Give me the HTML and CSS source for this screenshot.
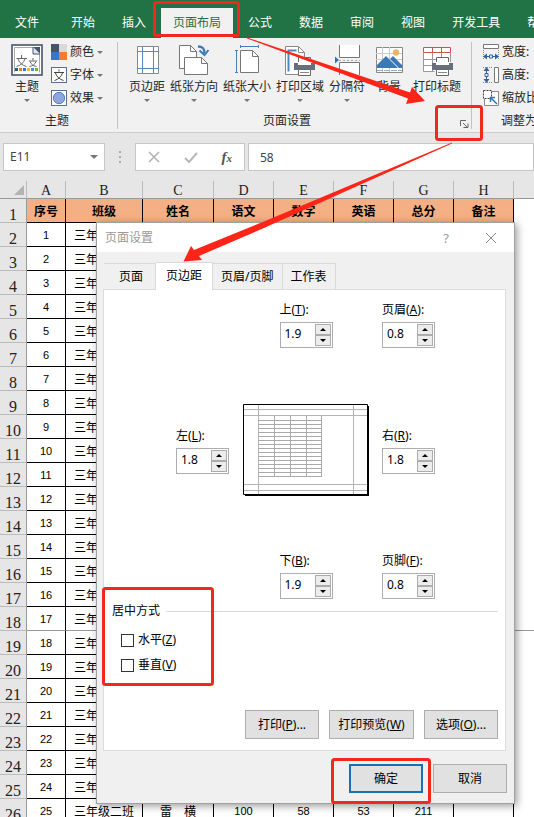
FILE: index.html
```html
<!DOCTYPE html>
<html lang="zh-CN">
<head>
<meta charset="utf-8">
<meta name="viewport" content="width=device-width, initial-scale=1">
<title>页面设置</title>
<link rel="stylesheet" href="styles.css">
</head>
<body>
<div class="app">
  <nav class="tabs">
    <button class="tab tab-file">文件</button>
    <button class="tab">开始</button>
    <button class="tab">插入</button>
    <button class="tab active">页面布局</button>
    <button class="tab">公式</button>
    <button class="tab">数据</button>
    <button class="tab">审阅</button>
    <button class="tab">视图</button>
    <button class="tab">开发工具</button>
    <button class="tab">帮助</button>
  </nav>

  <div class="ribbon">
    <section class="group group-theme">
      <div class="tools">
        <button class="big">
          <svg width="32" height="32" viewBox="0 0 32 32" fill="none">
            <rect x="1" y="1" width="30" height="30" fill="#fff" stroke="#44546a" stroke-width="1.6"/>
            <path d="M3.500 28.500V3.500H22L28.500 10V28.500" stroke="#a8a8a8"/>
            <path d="M22 3l7 7V3z" fill="#44546a"/><path d="M22 3v7h7" fill="#dce3ec" stroke="#44546a"/>
            <path d="M10.500 11v3M5.500 14.500H16M7 15c1.500 4 4.500 6.500 8.500 7.500M14 15c-1.500 4-4.500 6.500-8.500 7.500M22 14v2.500M18 17h8M19 17.500c1 3 3.500 4.500 6.500 5M25 17.500c-1 3-3.500 4.500-6.500 5" stroke="#666"/>
            <path d="M4 25.500h3" stroke="#44546a" stroke-width="3"/><path d="M8 25.500h3" stroke="#ed7d31" stroke-width="3"/><path d="M12 25.500h3" stroke="#4472c4" stroke-width="3"/><path d="M16 25.500h3" stroke="#f5b72c" stroke-width="3"/><path d="M20 25.500h3" stroke="#4a90c8" stroke-width="3"/><path d="M24 25.500h3" stroke="#70ad47" stroke-width="3"/>
          </svg>
          <span>主题</span><i class="caret"></i>
        </button>
        <div class="stack">
          <button class="small">
            <svg width="16" height="16"><path fill="#44546a" d="M0 0h8v8H0z"/><path fill="#d9d9d9" d="M8 0h8v8H8z"/><path fill="#3b74c8" d="M0 8h8v8H0z"/><path fill="#ed7d31" d="M8 8h8v8H8z"/></svg>
            <span>颜色</span><i class="caret"></i>
          </button>
          <button class="small">
            <svg width="16" height="16" fill="none"><rect x=".5" y=".5" width="15" height="15" fill="#fff" stroke="#5b6f8c"/><path d="M8 2.500v2M3 5.500h10M4.500 6c1 3.500 4 6.500 8 7.500M11.500 6c-1 3.500-4 6.500-8 7.500" stroke="#444"/></svg>
            <span>字体</span><i class="caret"></i>
          </button>
          <button class="small">
            <svg width="16" height="16"><rect x=".5" y=".5" width="15" height="15" fill="#fff" stroke="#5b6f8c"/><circle cx="8" cy="8" r="5.700" fill="#8ea6dc" stroke="#5e7cc4"/></svg>
            <span>效果</span><i class="caret"></i>
          </button>
        </div>
      </div>
      <div class="caption">主题</div>
    </section>

    <section class="group group-page">
      <div class="tools">
        <button class="big">
          <svg width="32" height="32" fill="none"><path d="M6.500 2.500h21v27h-21z" fill="#fff" stroke="#888"/><path d="M11.500 2v28M22.500 2v28M6 7.500h22M6 24.500h22" stroke="#5b88b5"/></svg>
          <span>页边距</span><i class="caret"></i>
        </button>
        <button class="big">
          <svg width="32" height="32" fill="none"><path d="M1.500 24.500v-23h11l6 6v17z" fill="#fff" stroke="#777"/><path d="M12.500 1.500v6h6" stroke="#777"/><path d="M6.500 30.500v-17h17l6 6v11z" fill="#fff" stroke="#777"/><path d="M23.500 13.500v6h6" stroke="#777"/><path d="M20 2.500c5 0 6.500 2 6.500 7" stroke="#3d7ab8" stroke-width="2.400"/><path d="M21.500 6.500l5 4.500 4-5" stroke="#3d7ab8" stroke-width="2"/></svg>
          <span>纸张方向</span><i class="caret"></i>
        </button>
        <button class="big">
          <svg width="32" height="32" fill="none"><path d="M9.500 28.500v-22h12l6 6v16z" fill="#fff" stroke="#777"/><path d="M21.500 6.500v6h6" stroke="#777"/><path d="M9 2.500h19M9.500 1v3M27.500 1v3M5.500 6v23M4 6.500h3M4 28.500h3" stroke="#4a7fb5"/></svg>
          <span>纸张大小</span><i class="caret"></i>
        </button>
        <button class="big">
          <svg width="32" height="32" fill="none"><path d="M1.500 30.500v-28h13l6 6v22z" fill="#fff" stroke="#888"/><path d="M14.500 2.500v6h6" stroke="#888"/><path d="M4.500 27.500v-21h8" stroke="#4a88bd" stroke-width="2"/><path d="M14.500 13.500h12v7h-12z" fill="#fff" stroke="#666"/><path d="M10 19h21v7H10z" fill="#66707c"/><path d="M14 18h13v3H14z" fill="#fff"/><path d="M14.500 25.500h12v6h-12z" fill="#fff" stroke="#666"/><path d="M16 28.500h9" stroke="#888"/></svg>
          <span>打印区域</span><i class="caret"></i>
        </button>
        <button class="big">
          <svg width="32" height="32" fill="none"><path d="M8.500 1v12.500h20V1M8.500 31V18.500h20V31" fill="#fff" stroke="#777"/><path d="M4 12.500l4 3.500-4 3.500z" fill="#2e75b6"/><path d="M8 16.500h21" stroke="#aaa" stroke-dasharray="2 2"/></svg>
          <span>分隔符</span><i class="caret"></i>
        </button>
        <button class="big bg-button">
          <svg width="32" height="32" fill="none"><path d="M3.500 3.500h26v25h-26z" fill="#fff" stroke="#888"/><path d="M3 9.500h26M3 15.500h26M9.500 3v25M16.500 3v25" stroke="#ccc"/><circle cx="23" cy="8.500" r="3.200" fill="#e8b76c"/><path d="M4 24v-3l9-9 12 12z" fill="#3c78b4"/><path d="M17 15l3-3 9 9v3h-3z" fill="#3c78b4"/><path d="M4 26.500h25" stroke="#9ab" stroke-dasharray="6 1"/></svg>
          <span>背景</span>
        </button>
        <button class="big">
          <svg width="32" height="32" fill="none"><path d="M2.500 3.500h27v24h-27z" fill="#fff"/><path d="M2.500 9v18.500h11M2 15.500h18M2 21.500h10M11.500 9v18M20.500 9v5M29.500 9v9" stroke="#999"/><path d="M2.500 3.500h27v5h-27zM11.500 3v5M20.500 3v5" stroke="#c6574c"/><path d="M15.500 13.500h12v7h-12z" fill="#fff" stroke="#666"/><path d="M11 19h21v7H11z" fill="#66707c"/><path d="M15 18h13v3H15z" fill="#fff"/><path d="M15.500 25.500h12v6h-12z" fill="#fff" stroke="#666"/><path d="M17 28.500h9" stroke="#888"/></svg>
          <span>打印标题</span>
        </button>
      </div>
      <div class="caption">页面设置
        <button class="launcher" aria-label="页面设置"><svg width="10" height="10" fill="none" stroke="#666"><path d="M1.500 7V1.500H7M4 4l4.500 4.500M9 4.500V8.500H4.500"/></svg></button>
      </div>
    </section>

    <section class="group group-scale">
      <div class="tools">
        <div class="stack">
          <button class="small">
            <svg width="16" height="16" fill="none"><path d="M.5.500h15v4H.5z" fill="#fff" stroke="#777"/><path d="M.5 6v9M15.500 6v9" stroke="#888" stroke-dasharray="1 1"/><path d="M0 12.500l4-3v6zM16 12.500l-4-3v6z" fill="#2e62a6"/><path d="M3 12.500h3M10 12.500h3M6.500 11h3v3h-3z" stroke="#2e62a6"/></svg>
            <span>宽度:</span>
          </button>
          <button class="small">
            <svg width="16" height="16" fill="none"><path d="M11.500.500h4v15h-4z" fill="#fff" stroke="#777"/><path d="M0 .5h10M0 15.500h10" stroke="#888" stroke-dasharray="1 1"/><path d="M3.500 0l-3 4h6zM3.500 16l-3-4h6z" fill="#2e62a6"/><path d="M3.500 3v3M3.500 10v3M2 6.500h3v3H2z" stroke="#2e62a6"/></svg>
            <span>高度:</span>
          </button>
          <button class="small">
            <svg width="16" height="16" fill="none"><path d="M5 1.500h10.500v14H1.500V9" fill="#fff" stroke="#888"/><path d="M.5.500h8v8h-8z" fill="#fff" stroke="#444" stroke-dasharray="2 1"/><path d="M14 14L8 8M7.500 12V7.500H12" stroke="#2e75b6" stroke-width="1.500"/></svg>
            <span>缩放比例:</span>
          </button>
        </div>
      </div>
      <div class="caption">调整为合适大小</div>
    </section>
  </div>

  <div class="formula-bar">
    <div class="name-box"><input aria-label="名称框" value="E11"><i class="caret"></i></div>
    <svg class="grip" width="4" height="16" fill="#aaa"><path d="M1 2h2v2H1zM1 7h2v2H1zM1 12h2v2H1z"/></svg>
    <div class="fx-box">
      <button aria-label="取消"><svg width="14" height="14" stroke="#b0b0b0" stroke-width="1.500" fill="none"><path d="M2 2l10 10M12 2L2 12"/></svg></button>
      <button aria-label="输入"><svg width="14" height="14" stroke="#b8b8b8" stroke-width="2" fill="none"><path d="M1 8l4 4L13 3"/></svg></button>
      <button class="fx">f<small>x</small></button>
    </div>
    <input class="formula" aria-label="编辑栏" value="58">
  </div>

  <main class="sheet">
    <table>
      <colgroup><col class="c-row"><col class="c-a"><col class="c-b"><col class="c-c"><col class="c-n"><col class="c-n"><col class="c-n"><col class="c-n"><col class="c-n"><col></colgroup>
      <thead>
        <tr><th><svg class="corner" width="10" height="10"><path d="M10 0v10H0z" fill="#b3b3b3"/></svg></th><th>A</th><th>B</th><th>C</th><th>D</th><th>E</th><th>F</th><th>G</th><th>H</th><th></th></tr>
      </thead>
      <tbody>
        <tr class="titles"><th>1</th><td>序号</td><td>班级</td><td>姓名</td><td>语文</td><td>数字</td><td>英语</td><td>总分</td><td>备注</td><td></td></tr>
        <tr><th>2</th><td>1</td><td class="grade">三年</td><td colspan="6"></td><td></td></tr>
        <tr><th>3</th><td>2</td><td class="grade">三年</td><td colspan="6"></td><td></td></tr>
        <tr><th>4</th><td>3</td><td class="grade">三年</td><td colspan="6"></td><td></td></tr>
        <tr><th>5</th><td>4</td><td class="grade">三年</td><td colspan="6"></td><td></td></tr>
        <tr><th>6</th><td>5</td><td class="grade">三年</td><td colspan="6"></td><td></td></tr>
        <tr><th>7</th><td>6</td><td class="grade">三年</td><td colspan="6"></td><td></td></tr>
        <tr><th>8</th><td>7</td><td class="grade">三年</td><td colspan="6"></td><td></td></tr>
        <tr><th>9</th><td>8</td><td class="grade">三年</td><td colspan="6"></td><td></td></tr>
        <tr><th>10</th><td>9</td><td class="grade">三年</td><td colspan="6"></td><td></td></tr>
        <tr><th>11</th><td>10</td><td class="grade">三年</td><td colspan="6"></td><td></td></tr>
        <tr><th>12</th><td>11</td><td class="grade">三年</td><td colspan="6"></td><td></td></tr>
        <tr><th>13</th><td>12</td><td class="grade">三年</td><td colspan="6"></td><td></td></tr>
        <tr><th>14</th><td>13</td><td class="grade">三年</td><td colspan="6"></td><td></td></tr>
        <tr><th>15</th><td>14</td><td class="grade">三年</td><td colspan="6"></td><td></td></tr>
        <tr><th>16</th><td>15</td><td class="grade">三年</td><td colspan="6"></td><td></td></tr>
        <tr><th>17</th><td>16</td><td class="grade">三年</td><td colspan="6"></td><td></td></tr>
        <tr class="page-break"><th>18</th><td>17</td><td class="grade">三年</td><td colspan="6"></td><td></td></tr>
        <tr><th>19</th><td>18</td><td class="grade">三年</td><td colspan="6"></td><td></td></tr>
        <tr><th>20</th><td>19</td><td class="grade">三年</td><td colspan="6"></td><td></td></tr>
        <tr><th>21</th><td>20</td><td class="grade">三年</td><td colspan="6"></td><td></td></tr>
        <tr><th>22</th><td>21</td><td class="grade">三年</td><td colspan="6"></td><td></td></tr>
        <tr><th>23</th><td>22</td><td class="grade">三年</td><td colspan="6"></td><td></td></tr>
        <tr><th>24</th><td>23</td><td class="grade">三年</td><td colspan="6"></td><td></td></tr>
        <tr><th>25</th><td>24</td><td class="grade">三年</td><td colspan="6"></td><td></td></tr>
        <tr><th>26</th><td>25</td><td class="grade">三年级二班</td><td>雷　横</td><td>100</td><td>58</td><td>53</td><td>211</td><td></td><td></td></tr>
      </tbody>
    </table>

    <div class="dialog" role="dialog" aria-labelledby="dialog-title">
      <header class="title-bar">
        <span id="dialog-title">页面设置</span>
        <button class="help">?</button>
        <button aria-label="关闭"><svg width="12" height="12" stroke="#888" fill="none"><path d="M1 1l10 10M11 1L1 11"/></svg></button>
      </header>
      <div class="dialog-tabs" role="tablist">
        <button role="tab">页面</button>
        <button role="tab" class="current" aria-selected="true">页边距</button>
        <button role="tab">页眉/页脚</button>
        <button role="tab">工作表</button>
      </div>
      <div class="panel">
        <div class="margins">
          <div class="field at-top"><label for="m-top">上(<u>T</u>):</label><div class="spin"><input id="m-top" value="1.9"><button aria-label="增加"><i class="up"></i></button><button aria-label="减少"><i class="down"></i></button></div></div>
          <div class="field at-header"><label for="m-header">页眉(<u>A</u>):</label><div class="spin"><input id="m-header" value="0.8"><button aria-label="增加"><i class="up"></i></button><button aria-label="减少"><i class="down"></i></button></div></div>
          <div class="field at-left"><label for="m-left">左(<u>L</u>):</label><div class="spin"><input id="m-left" value="1.8"><button aria-label="增加"><i class="up"></i></button><button aria-label="减少"><i class="down"></i></button></div></div>
          <svg class="preview" width="126" height="92" fill="none">
            <path d="M2 2h124v90H2z" fill="#000"/>
            <path d="M.5.500h124v90H.5z" fill="#fff" stroke="#000"/>
            <path d="M1 5.500h123M1 11.500h123M1 80.500h123M1 86.500h123M15.500 1v89M110.500 1v89" stroke="#b5b5b5"/>
            <path d="M15 16.500h64M15 20.500h64M15 24.500h64M15 28.500h64M15 32.500h64M15 36.500h64M15 40.500h64M15 44.500h64M15 48.500h64M15 52.500h64M15 56.500h64M15 60.500h64M15 64.500h64M15 68.500h64M15 72.500h64M31.500 12v61M47.500 12v61M63.500 12v61M78.500 12v61" stroke="#aaa"/>
          </svg>
          <div class="field at-right"><label for="m-right">右(<u>R</u>):</label><div class="spin"><input id="m-right" value="1.8"><button aria-label="增加"><i class="up"></i></button><button aria-label="减少"><i class="down"></i></button></div></div>
          <div class="field at-bottom"><label for="m-bottom">下(<u>B</u>):</label><div class="spin"><input id="m-bottom" value="1.9"><button aria-label="增加"><i class="up"></i></button><button aria-label="减少"><i class="down"></i></button></div></div>
          <div class="field at-footer"><label for="m-footer">页脚(<u>F</u>):</label><div class="spin"><input id="m-footer" value="0.8"><button aria-label="增加"><i class="up"></i></button><button aria-label="减少"><i class="down"></i></button></div></div>
        </div>
        <div class="center-title">居中方式</div>
        <div class="checks">
          <label><input type="checkbox">水平(<u>Z</u>)</label>
          <label><input type="checkbox">垂直(<u>V</u>)</label>
        </div>
        <div class="actions">
          <button class="push">打印(<u>P</u>)...</button>
          <button class="push wide">打印预览(<u>W</u>)</button>
          <button class="push">选项(<u>O</u>)...</button>
        </div>
      </div>
      <footer class="actions">
        <button class="push default">确定</button>
        <button class="push">取消</button>
      </footer>
    </div>
  </main>

  <svg class="marks" width="534" height="817" fill="none" stroke="#f0281e" stroke-width="3">
    <rect x="154.500" y="2.500" width="84" height="33" rx="2"/>
    <rect x="436.500" y="106.500" width="45" height="33" rx="2"/>
    <rect x="103.500" y="588.500" width="109" height="96" rx="2"/>
    <rect x="332.500" y="759.500" width="97" height="43" rx="2"/>
    <path d="M247 37.500L410 92.500L412 87L425 101L406 104L408 98.500L247 38.500z" fill="#ff2418" stroke="none"/>
    <path d="M452 142.500L264 221.500L194 250L191 246L183.500 261.500L202 260L199 256L264 228L452 143.500z" fill="#ff2418" stroke="none"/>
  </svg>
</div>
</body>
</html>
```
FILE: styles.css
```css
* {
  box-sizing: border-box;
}

body {
  margin: 0;
  font: 12px/16px "Noto Sans", "Noto Sans CJK SC", sans-serif;
  color: #262626;
  background: #fff;
}

button,
input {
  margin: 0;
  padding: 0;
  border: 0;
  border-radius: 0;
  font: inherit;
  color: inherit;
  background: none;
}

.app {
  position: relative;
  display: flex;
  flex-direction: column;
  height: 100vh;
  overflow: hidden;
}

/* Ribbon tabs */
.tabs {
  flex: none;
  display: flex;
  align-items: flex-end;
  gap: 3px;
  height: 38px;
  padding-left: 3px;
  background: #217346;
}

.tab {
  flex: none;
  height: 30px;
  padding: 0 12px;
  color: #fff;
  white-space: nowrap;
}

.tab-file {
  margin-right: 5px;
}

.tab.active {
  color: #217346;
  background: #f1f1f1;
}

/* Ribbon */
.ribbon {
  flex: none;
  display: flex;
  height: 95px;
  padding: 4px 0 3px;
  background: #f1f1f1;
  border-bottom: 1px solid #cdcdcd;
}

.group {
  flex: none;
  display: flex;
  flex-direction: column;
  justify-content: space-between;
  border-right: 1px solid #c2c2c2;
}

.group-theme {
  padding: 0 14px 0 11px;
}

.group-page {
  padding: 0 10px 0 11px;
}

.group-scale {
  padding-left: 11px;
  border-right: 0;
}

.tools {
  display: flex;
  gap: 5px;
  padding-top: 2px;
}

.group-theme .tools {
  gap: 8px;
}

.big {
  display: flex;
  flex-direction: column;
  align-items: center;
  white-space: nowrap;
}

.big span {
  margin-top: 3px;
}

.big .caret {
  margin-top: 4px;
}

.bg-button {
  min-width: 38px;
}

.caret {
  border: 3px solid transparent;
  border-top-color: #777;
  border-bottom: 0;
}

.stack {
  display: flex;
  flex-direction: column;
  gap: 7px;
}

.small {
  display: flex;
  align-items: center;
  gap: 3px;
  white-space: nowrap;
}

.caption {
  position: relative;
  height: 16px;
  text-align: center;
}

.group-page .caption {
  padding-right: 16px;
}

.group-scale .caption {
  padding-left: 18px;
}

.launcher {
  position: absolute;
  right: -8px;
  bottom: 0;
  height: 10px;
}

.launcher svg {
  display: block;
}

/* Formula bar */
.formula-bar {
  flex: none;
  display: flex;
  align-items: center;
  height: 48px;
  padding-left: 3px;
  background: #e6e6e6;
}

.name-box,
.fx-box,
.formula {
  height: 28px;
  background: #fff;
  border: 1px solid #c6c6c6;
}

.name-box {
  display: flex;
  align-items: center;
  width: 102px;
  padding: 0 6px;
}

.name-box input {
  flex: 1;
  min-width: 0;
  color: #444;
}

.name-box .caret {
  border-width: 4px 4px 0;
}

.grip {
  margin: 0 13px;
}

.fx-box {
  display: flex;
  align-items: center;
  justify-content: space-between;
  width: 110px;
  padding: 0 12px 0 11px;
}

.fx-box svg {
  display: block;
}

.fx {
  font: italic bold 15px/16px "Liberation Serif", serif;
  color: #555;
}

.fx small {
  font-size: 11px;
}

.formula {
  flex: 1;
  min-width: 0;
  margin-left: 3px;
  padding: 0 11px;
  color: #444;
}

/* Worksheet */
.sheet {
  position: relative;
  flex: 1;
}

table {
  width: 100%;
  table-layout: fixed;
  border-collapse: separate;
  border-spacing: 0;
  color: #000;
}

.c-row { width: 27px; }
.c-a { width: 39px; }
.c-b { width: 77px; }
.c-c { width: 71px; }
.c-n { width: 60px; }

th,
td {
  height: 24px;
  padding: 0;
  text-align: center;
  white-space: nowrap;
}

th {
  font: 16px/14px "Liberation Serif", serif;
  color: #222;
  background: #e6e6e6;
}

thead th {
  height: 18px;
  font-size: 14px;
  vertical-align: bottom;
  border-right: 1px solid #bbb;
  border-bottom: 1px solid #999;
}

thead th:last-child {
  border-right: 0;
}

.corner {
  display: block;
  margin: 0 0 3px 14px;
}

tbody th {
  vertical-align: bottom;
  border-right: 1px solid #999;
  border-bottom: 1px solid #bbb;
}

td {
  font: 11px/16px "Liberation Sans", sans-serif;
  border-right: 1px solid #000;
  border-bottom: 1px solid #000;
}

td:last-child {
  border: 0;
}

td:nth-child(4),
.grade,
.titles td {
  font: 12px/16px "Noto Sans CJK SC", sans-serif;
}

td.grade {
  padding-left: 8px;
  text-align: left;
}

.titles td {
  font-weight: bold;
  background: #f4b084;
}

.titles td:last-child {
  background: none;
}

.page-break td,
.page-break td:last-child {
  border-bottom: 1px solid #999;
}

/* Page setup dialog */
.dialog {
  position: absolute;
  top: 41px;
  left: 96px;
  width: 419px;
  color: #000;
  background: #f0f0f0;
  border: 1px solid #a0a0a0;
  box-shadow: 2px 2px 8px rgba(0, 0, 0, 0.4);
}

.title-bar {
  display: flex;
  align-items: center;
  gap: 36px;
  height: 29px;
  padding: 0 17px 0 8px;
  color: #999;
  background: #fff;
}

.title-bar span {
  flex: 1;
}

.title-bar svg {
  display: block;
}

.help {
  font-size: 13px;
}

.dialog-tabs {
  display: flex;
  align-items: flex-end;
  height: 37px;
  padding-left: 7px;
}

.dialog-tabs button {
  height: 26px;
  padding: 0 8px;
  border: 1px solid #d9d9d9;
  border-width: 1px 1px 0 0;
}

.dialog-tabs button:first-child {
  padding: 0 12px 0 15px;
}

.dialog-tabs .current {
  position: relative;
  height: 28px;
  margin-bottom: -1px;
  padding: 0 10px 2px;
  background: #fff;
}

.panel {
  margin: 0 8px 0 6px;
  padding: 11px 7px 11px 8px;
  background: #fff;
  border: 1px solid #dcdcdc;
}

.margins {
  display: grid;
  grid-template-columns: 54px 126px 53px;
  grid-template-rows: auto auto auto;
  gap: 56px 13px;
  align-items: center;
  padding-left: 64px;
}

.field label {
  display: block;
  height: 21px;
  line-height: 18px;
  white-space: nowrap;
}

.at-top { grid-area: 1 / 2; justify-self: center; }
.at-header { grid-area: 1 / 3; }
.at-left { grid-area: 2 / 1; }
.preview { grid-area: 2 / 2; }
.at-right { grid-area: 2 / 3; }
.at-bottom { grid-area: 3 / 2; justify-self: center; }
.at-footer { grid-area: 3 / 3; }

.spin {
  display: grid;
  grid-template-columns: 1fr 16px;
  grid-template-rows: 11px 11px;
  width: 53px;
  height: 26px;
  padding: 1px;
  border: 1px solid #abadb3;
}

.spin input {
  grid-row: 1 / 3;
  min-width: 0;
  width: 100%;
  padding: 0 0 2px 3px;
}

.spin button {
  display: flex;
  align-items: center;
  justify-content: center;
  background: #ececec;
  border: 1px solid #acacac;
}

.up,
.down {
  border: 3px solid transparent;
}

.up {
  border-top: 0;
  border-bottom-color: #000;
}

.down {
  border-bottom: 0;
  border-top-color: #000;
}

.center-title {
  display: flex;
  align-items: center;
  gap: 6px;
  margin-top: 4px;
}

.center-title::after {
  content: "";
  flex: 1;
  border-top: 1px solid #dcdcdc;
}

.checks {
  display: flex;
  flex-direction: column;
  gap: 9px;
  margin: 13px 0 37px 9px;
}

.checks label {
  display: flex;
  align-items: center;
  height: 16px;
}

.checks input {
  appearance: none;
  width: 13px;
  height: 13px;
  margin-right: 4px;
  background: #fff;
  border: 1px solid #333;
}

.actions {
  display: flex;
  justify-content: flex-end;
  gap: 10px;
}

.push {
  width: 74px;
  height: 29px;
  white-space: nowrap;
  background: #e1e1e1;
  border: 1px solid #adadad;
}

.push.wide {
  width: 85px;
}

.push.default {
  border: 2px solid #1a6fb5;
}

footer.actions {
  padding: 13px 7px 10px;
}

/* Callouts over the window */
.marks {
  position: absolute;
  top: 0;
  left: 0;
  pointer-events: none;
}
```
